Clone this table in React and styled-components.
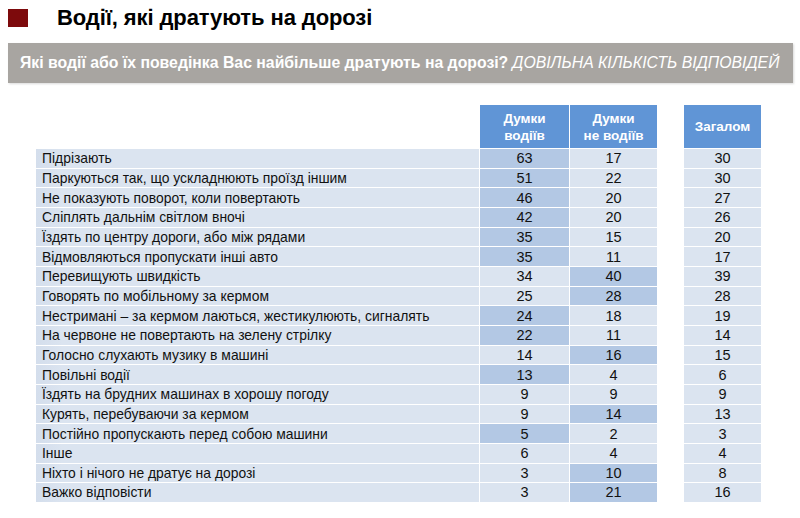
import React from "react";
import styled, { createGlobalStyle } from "styled-components";

const colors = {
  maroon: "#7d0a0c",
  bar: "#a8a5a1",
  head: "#6095d6",
  cell: "#dbe4f0",
  hot: "#b3c8e4",
  text: "#111111",
};

const rows = [
  ["Підрізають", 63, 17, 30, 1],
  ["Паркуються так, що ускладнюють проїзд іншим", 51, 22, 30, 1],
  ["Не показують поворот, коли повертають", 46, 20, 27, 1],
  ["Сліплять дальнім світлом вночі", 42, 20, 26, 1],
  ["Їздять по центру дороги, або між рядами", 35, 15, 20, 1],
  ["Відмовляються пропускати інші авто", 35, 11, 17, 1],
  ["Перевищують швидкість", 34, 40, 39, 2],
  ["Говорять по мобільному за кермом", 25, 28, 28, 2],
  ["Нестримані – за кермом лаються, жестикулюють, сигналять", 24, 18, 19, 1],
  ["На червоне не повертають на зелену стрілку", 22, 11, 14, 1],
  ["Голосно слухають музику в машині", 14, 16, 15, 2],
  ["Повільні водії", 13, 4, 6, 1],
  ["Їздять на брудних машинах в хорошу погоду", 9, 9, 9, 0],
  ["Курять, перебуваючи за кермом", 9, 14, 13, 2],
  ["Постійно пропускають перед собою машини", 5, 2, 3, 1],
  ["Інше", 6, 4, 4, 0],
  ["Ніхто і нічого не дратує на дорозі", 3, 10, 8, 2],
  ["Важко відповісти", 3, 21, 16, 2],
];

const GlobalStyle = createGlobalStyle`
  body {
    margin: 0;
    background: #fff;
    font-family: "Liberation Sans", Arial, sans-serif;
  }
`;

const Page = styled.div`
  width: 800px;
  height: 518px;
  overflow: hidden;
  padding: 5px 7px 0 8px;
  box-sizing: border-box;
`;

const TitleRow = styled.div`
  display: flex;
  align-items: center;
  height: 26px;
`;

const Square = styled.div`
  width: 20px;
  height: 18px;
  background: ${colors.maroon};
  margin-right: 29px;
`;

const Title = styled.h1`
  margin: 0;
  font-size: 22px;
  font-weight: bold;
  color: #000;
  letter-spacing: -0.1px;
`;

const Question = styled.div`
  margin-top: 12px;
  height: 40px;
  background: ${colors.bar};
  color: #fff;
  display: flex;
  align-items: center;
  padding-left: 12px;
  font-size: 15.8px;
  font-weight: bold;
  white-space: nowrap;
  box-shadow: 1px 1px 2px rgba(0, 0, 0, 0.15);
`;

const Note = styled.span`
  font-weight: normal;
  font-style: italic;
  margin-left: 4px;
`;

const Table = styled.div`
  display: grid;
  grid-template-columns: 443px 89px 87px 25px 77px;
  grid-template-rows: 43px;
  grid-auto-rows: 18.67px;
  column-gap: 1px;
  row-gap: 1px;
  margin: 22px 0 0 28px;
`;

const Blank = styled.div``;

const HeadCell = styled.div`
  background: ${colors.head};
  color: #fff;
  font-weight: bold;
  font-size: 13.5px;
  line-height: 17px;
  display: flex;
  align-items: center;
  justify-content: center;
  text-align: center;
`;

const Label = styled.div`
  background: linear-gradient(90deg, #d4deec 0%, ${colors.cell} 6%, ${colors.cell} 100%);
  color: ${colors.text};
  font-size: 13.9px;
  display: flex;
  align-items: center;
  padding-left: 6px;
  white-space: nowrap;
`;

const Value = styled.div`
  background: ${(p) => (p.hot ? colors.hot : colors.cell)};
  color: ${colors.text};
  font-size: 14.5px;
  display: flex;
  align-items: center;
  justify-content: center;
`;

export default function App() {
  return (
    <>
      <GlobalStyle />
      <Page>
        <TitleRow>
          <Square />
          <Title>Водії, які дратують на дорозі</Title>
        </TitleRow>
        <Question>
          Які водії або їх поведінка Вас найбільше дратують на дорозі?
          <Note>ДОВІЛЬНА КІЛЬКІСТЬ ВІДПОВІДЕЙ</Note>
        </Question>
        <Table>
          <Blank />
          <HeadCell>
            Думки
            <br />
            водіїв
          </HeadCell>
          <HeadCell>
            Думки
            <br />
            не водіїв
          </HeadCell>
          <Blank />
          <HeadCell>Загалом</HeadCell>
          {rows.map(([label, a, b, c, hot]) => (
            <React.Fragment key={label}>
              <Label>{label}</Label>
              <Value hot={hot === 1}>{a}</Value>
              <Value hot={hot === 2}>{b}</Value>
              <Blank />
              <Value>{c}</Value>
            </React.Fragment>
          ))}
        </Table>
      </Page>
    </>
  );
}
